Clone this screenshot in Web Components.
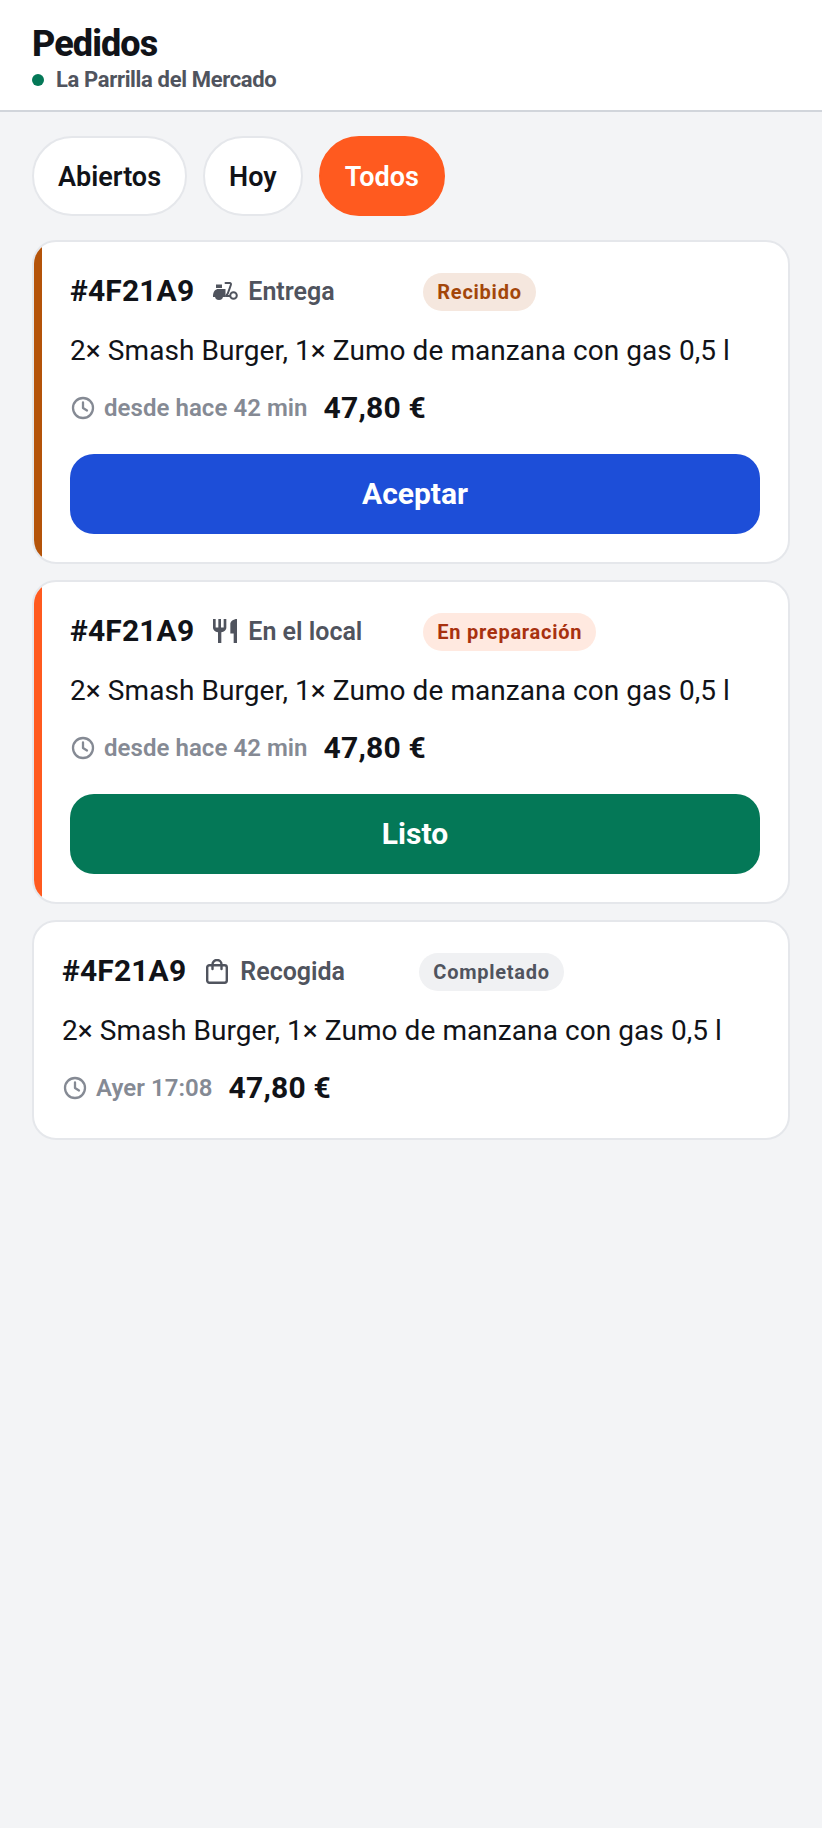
<!DOCTYPE html>
<html lang="es">
<head>
<meta charset="utf-8">
<title>Pedidos</title>
<style>
  html, body { margin: 0; padding: 0; }
  body {
    min-height: 1828px;
    background: #F3F4F6;
    color: #111318;
    font-family: Roboto, "Liberation Sans", sans-serif;
  }
  main {
    display: flex;
    flex-direction: column;
    gap: 16px;
    padding: 24px 32px;
  }
</style>
</head>
<body>
<app-header name="La Parrilla del Mercado">Pedidos</app-header>
<main>
  <filter-tabs>
    <filter-pill>Abiertos</filter-pill>
    <filter-pill>Hoy</filter-pill>
    <filter-pill active>Todos</filter-pill>
  </filter-tabs>
  <order-card stripe="#B45309" code="#4F21A9" type="delivery" type-label="Entrega" status="received" status-label="Recibido" since="desde hace 42 min" total="47,80 €" action="Aceptar" action-color="#1D4ED8">2× Smash Burger, 1× Zumo de manzana con gas 0,5 l</order-card>
  <order-card stripe="#FF5A1F" code="#4F21A9" type="dine-in" type-label="En el local" status="preparing" status-label="En preparación" since="desde hace 42 min" total="47,80 €" action="Listo" action-color="#047857">2× Smash Burger, 1× Zumo de manzana con gas 0,5 l</order-card>
  <order-card code="#4F21A9" type="pickup" type-label="Recogida" status="done" status-label="Completado" since="Ayer 17:08" total="47,80 €">2× Smash Burger, 1× Zumo de manzana con gas 0,5 l</order-card>
</main>

<script>
const ICONS = {
  delivery: `<svg width="26" height="20" viewBox="0 0 26 20" fill="none">
    <path d="M4 3.500h6v3.500H4z" fill="currentColor"/>
    <path d="M1 14.500c0-3.800 2.400-6.500 5.500-6.500H13.500v8H1z" fill="currentColor"/>
    <circle cx="7" cy="15" r="4" fill="currentColor"/>
    <path d="M13.500 2h4.200c1 0 1.500.9 1.200 1.800l-1.600 4.500c-.6 2.300-1.400 4.900-3.300 6.700h4" stroke="currentColor" stroke-width="2" stroke-linecap="round" stroke-linejoin="round"/>
    <circle cx="21.500" cy="14.500" r="3.300" stroke="currentColor" stroke-width="2"/>
  </svg>`,
  'dine-in': `<svg width="24" height="24" viewBox="3 2 18 20" fill="currentColor" preserveAspectRatio="none">
    <path d="M11 9H9V2H7v7H5V2H3v7c0 2.120 1.660 3.840 3.750 3.970V22h2.500v-9.030C11.340 12.840 13 11.120 13 9V2h-2v7zm5-3v8h2.500v8H21V2c-2.760 0-5 2.240-5 4z"/>
  </svg>`,
  pickup: `<svg width="22" height="25" viewBox="0 0 22 25" fill="none" stroke="currentColor" stroke-width="2.400">
    <rect x="1.200" y="6.200" width="19.600" height="17.600" rx="2.200"/>
    <path d="M6.500 10V5.500a4.500 4.500 0 0 1 9 0V10" stroke-linecap="round"/>
  </svg>`
};

class AppHeader extends HTMLElement {
  constructor() {
    super();
    this.attachShadow({ mode: 'open' });
  }
  connectedCallback() {
    this.shadowRoot.innerHTML = `
      <style>
        :host {
          display: block;
          box-sizing: border-box;
          height: 112px;
          background: #FFFFFF;
          border-bottom: 2px solid #D1D5DB;
          padding: 25px 32px 0;
        }
        h1 {
          margin: 0 0 4px;
          font-size: 36px;
          line-height: 38px;
          font-weight: 800;
          letter-spacing: -0.9px;
          color: #111318;
        }
        .place {
          display: flex;
          align-items: center;
          gap: 12px;
          font-size: 22px;
          line-height: 26px;
          font-weight: 700;
          letter-spacing: -0.35px;
          color: #50545E;
        }
        .dot {
          width: 12px;
          height: 12px;
          border-radius: 50%;
          background: #047857;
        }
      </style>
      <h1><slot></slot></h1>
      <div class="place"><span class="dot"></span>${this.getAttribute('name') || ''}</div>
    `;
  }
}

class FilterTabs extends HTMLElement {
  constructor() {
    super();
    this.attachShadow({ mode: 'open' });
    this.shadowRoot.innerHTML = `
      <style>
        :host { display: flex; gap: 16px; margin-bottom: 8px; }
      </style>
      <slot></slot>
    `;
  }
}

class FilterPill extends HTMLElement {
  constructor() {
    super();
    this.attachShadow({ mode: 'open' });
    this.shadowRoot.innerHTML = `
      <style>
        :host {
          display: flex;
          align-items: center;
          box-sizing: border-box;
          height: 80px;
          padding: 2px 24px 0;
          border: 2px solid #E5E7EB;
          border-radius: 40px;
          background: #FFFFFF;
          color: #111318;
          font-size: 27px;
          font-weight: 600;
        }
        :host([active]) {
          background: #FF5A1F;
          border-color: #FF5A1F;
          color: #FFFFFF;
        }
      </style>
      <slot></slot>
    `;
  }
}

class StatusBadge extends HTMLElement {
  constructor() {
    super();
    this.attachShadow({ mode: 'open' });
    this.shadowRoot.innerHTML = `
      <style>
        :host {
          display: inline-flex;
          align-items: center;
          height: 38px;
          padding: 0 14px;
          margin-top: 1px;
          border-radius: 19px;
          font-size: 20px;
          font-weight: 700;
          letter-spacing: 0.75px;
        }
        :host([status="received"]) { background: #F5E7DE; color: #A3460A; }
        :host([status="preparing"]) { background: #FFE9E0; color: #A8310F; }
        :host([status="done"]) { background: #F0F1F3; color: #50545E; }
      </style>
      <slot></slot>
    `;
  }
}

class OrderCard extends HTMLElement {
  constructor() {
    super();
    this.attachShadow({ mode: 'open' });
  }
  connectedCallback() {
    const attr = (n) => this.getAttribute(n) || '';
    const stripe = attr('stripe');
    const action = attr('action');
    this.shadowRoot.innerHTML = `
      <style>
        :host {
          display: block;
          position: relative;
          overflow: hidden;
          box-sizing: border-box;
          background: #FFFFFF;
          border: 2px solid #E5E7EB;
          border-radius: 24px;
          padding: 30px 28px 30px;
        }
        :host([stripe]) { padding-left: 36px; padding-bottom: 28px; }
        :host([stripe])::before {
          content: "";
          position: absolute;
          left: 0;
          top: 0;
          bottom: 0;
          width: 8px;
          background: var(--stripe);
        }
        .top { display: flex; align-items: center; height: 38px; }
        .code {
          padding-bottom: 2px;
          font-size: 30px;
          font-weight: 700;
          letter-spacing: 0.15px;
          color: #111318;
        }
        .type {
          display: flex;
          align-items: center;
          gap: 10px;
          margin-left: 18px;
          width: 211px;
          font-size: 25px;
          font-weight: 600;
          color: #50545E;
        }
        .type .ico { display: flex; justify-content: center; width: 26px; flex: none; }
        .type svg { display: block; flex: none; }
        :host(:not([stripe])) .type { width: 215px; }
        .items {
          margin-top: 24px;
          font-size: 28px;
          line-height: 34px;
          letter-spacing: 0.07px;
          color: #111318;
        }
        .meta {
          display: flex;
          align-items: center;
          gap: 16px;
          margin-top: 20px;
          height: 40px;
        }
        .since {
          display: flex;
          align-items: center;
          gap: 8px;
          font-size: 24px;
          font-weight: 600;
          letter-spacing: 0.05px;
          color: #858A94;
        }
        .since svg { display: block; }
        .total {
          padding-bottom: 2px;
          font-size: 30px;
          font-weight: 700;
          letter-spacing: 0.2px;
          color: #111318;
        }
        button {
          display: block;
          width: 100%;
          height: 80px;
          margin-top: 26px;
          padding: 0 0 2px;
          border: 0;
          border-radius: 24px;
          background: var(--action);
          color: #FFFFFF;
          font: 700 30px Roboto, "Liberation Sans", sans-serif;
        }
      </style>
      <div class="top">
        <span class="code">${attr('code')}</span>
        <span class="type"><span class="ico">${ICONS[attr('type')]}</span>${attr('type-label')}</span>
        <status-badge status="${attr('status')}">${attr('status-label')}</status-badge>
      </div>
      <div class="items"><slot></slot></div>
      <div class="meta">
        <span class="since">
          <svg width="26" height="26" viewBox="0 0 26 26" fill="none" stroke="currentColor" stroke-width="2.300" stroke-linecap="round" stroke-linejoin="round">
            <circle cx="13" cy="13" r="10"/>
            <path d="M13 7.500V13l4 2.500"/>
          </svg>
          ${attr('since')}
        </span>
        <span class="total">${attr('total')}</span>
      </div>
      ${action ? `<button type="button">${action}</button>` : ''}
    `;
    if (stripe) this.style.setProperty('--stripe', stripe);
    if (action) this.style.setProperty('--action', attr('action-color'));
  }
}

customElements.define('app-header', AppHeader);
customElements.define('filter-tabs', FilterTabs);
customElements.define('filter-pill', FilterPill);
customElements.define('status-badge', StatusBadge);
customElements.define('order-card', OrderCard);
</script>
</body>
</html>
